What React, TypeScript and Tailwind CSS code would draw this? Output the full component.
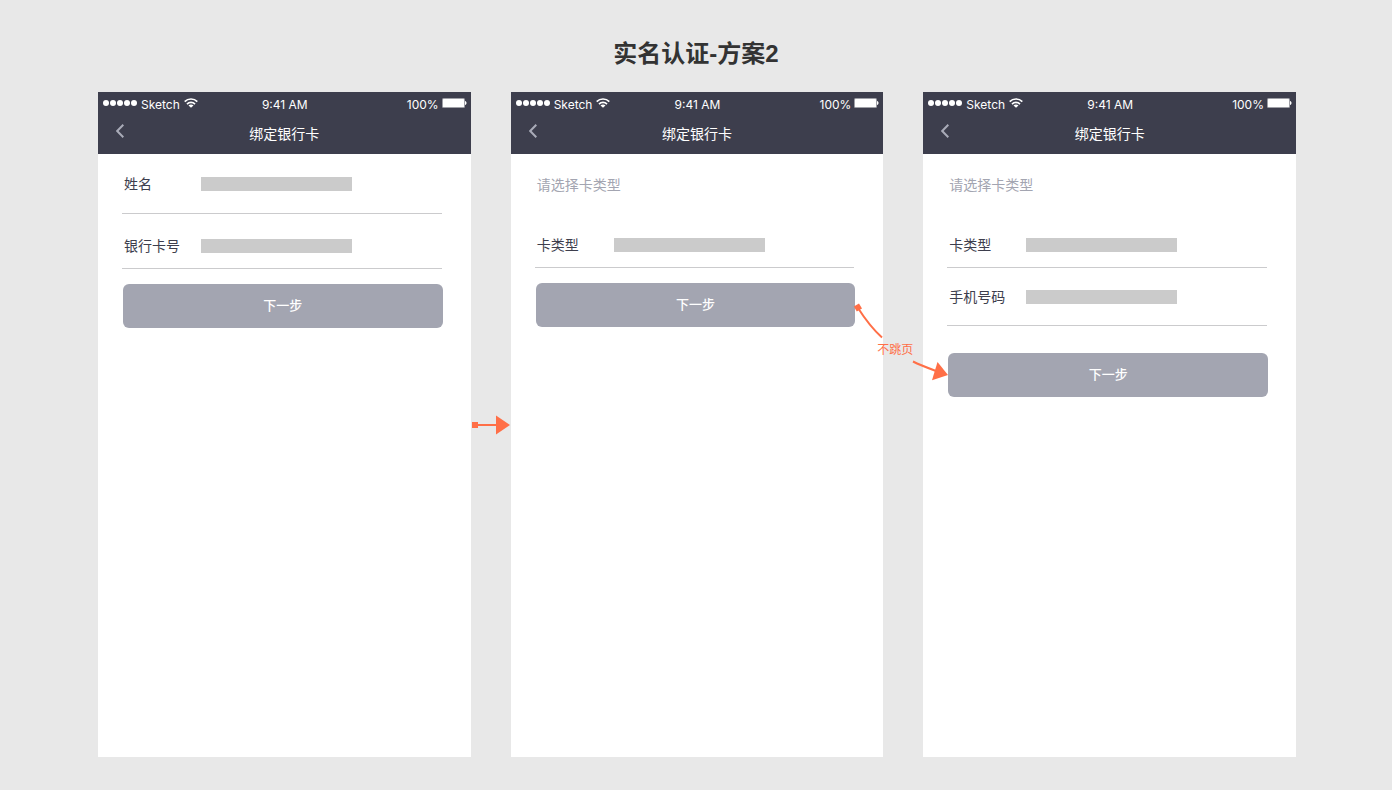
import type { ReactNode } from "react";

type FieldProps = {
  id: string;
  label: string;
  className: string;
};

const StatusBar = () => (
  <div className="grid grid-cols-3 items-center h-[26px] pl-[5px] pr-1 font-['Inter','Liberation_Sans',sans-serif] text-xs leading-6">
    <div className="flex items-center gap-1">
      <svg width="34" height="6" viewBox="0 0 34 6" fill="currentColor" className="-mt-1">
        <circle cx="3" cy="3" r="3" />
        <circle cx="10" cy="3" r="3" />
        <circle cx="17" cy="3" r="3" />
        <circle cx="24" cy="3" r="3" />
        <circle cx="31" cy="3" r="3" />
      </svg>
      <span>Sketch</span>
      <svg
        width="14"
        height="10"
        viewBox="0 0 14 10"
        fill="none"
        stroke="currentColor"
        strokeWidth="1.7"
        className="-mt-1"
      >
        <path d="M0.7 3.7C4.2 0.1 9.8 0.1 13.3 3.7" />
        <path d="M3 6.1C5.2 3.9 8.8 3.9 11 6.1" />
        <path d="M7 9.8L4.5 7.4C5.9 6.2 8.1 6.2 9.5 7.4Z" fill="currentColor" stroke="none" />
      </svg>
    </div>
    <span className="text-center">9:41 AM</span>
    <div className="flex items-center justify-end gap-[3px]">
      <span>100%</span>
      <svg width="25" height="10" viewBox="0 0 25 10" className="-mt-1">
        <rect x="0" y="0" width="23" height="10" rx="1.5" fill="#9e9fa6" />
        <rect x="1" y="1" width="21" height="8" rx="0.5" fill="#fff" />
        <path d="M23 3C25 3.5 25 6.5 23 7Z" fill="#fff" />
      </svg>
    </div>
  </div>
);

const Field = ({ id, label, className }: FieldProps) => (
  <div className={`flex pl-0.5 mr-px border-b border-[#cbcbcd] ${className}`}>
    <label htmlFor={id} className="w-[77px] shrink-0 text-sm leading-[14px] text-[#3d3e4d]">
      {label}
    </label>
    <input id={id} type="text" className="w-[151px] h-[14px] min-w-0 bg-[#cbcbcb] outline-none" />
  </div>
);

const Hint = ({ children }: { children: ReactNode }) => (
  <p className="h-[60px] pl-0.5 text-sm leading-[62px] text-[#a3a5b1]">{children}</p>
);

const NextButton = ({ className }: { className: string }) => (
  <button
    type="submit"
    className={`ml-px h-11 rounded-md bg-[#a3a5b1] text-[13px] font-medium text-white ${className}`}
  >
    下一步
  </button>
);

const Phone = ({ children, connector }: { children: ReactNode; connector?: ReactNode }) => (
  <section className="relative min-h-[665px] bg-white">
    <header className="h-[62px] bg-[#3d3e4d] text-white">
      <StatusBar />
      <div className="grid grid-cols-[48px_1fr_48px] items-center h-8">
        <button type="button" aria-label="返回" className="pl-[18px] pb-1.5">
          <svg
            width="8"
            height="14"
            viewBox="0 0 8 14"
            fill="none"
            stroke="#a9abb8"
            strokeWidth="2"
          >
            <path d="M7.3 0.8L1.2 7L7.3 13.2" />
          </svg>
        </button>
        <h2 className="text-center text-sm leading-5">绑定银行卡</h2>
      </div>
    </header>
    <form className="flex flex-col pl-6 pr-7" onSubmit={(e) => e.preventDefault()}>
      {children}
    </form>
    {connector}
  </section>
);

const StraightArrow = () => (
  <svg
    width="40"
    height="20"
    viewBox="0 0 40 20"
    fill="#ff6f47"
    className="absolute left-full top-[323px]"
  >
    <rect x="1" y="7" width="6" height="6" />
    <rect x="7" y="9" width="18" height="2" />
    <path d="M25 0.5L39 10L25 19.5Z" />
  </svg>
);

// runs from the button of the previous phone to the button of this one
const CurvedArrow = () => (
  <div className="absolute z-10 -left-[70px] top-[208px] w-24 h-[84px] text-[#ff6f47]">
    <svg width="96" height="84" viewBox="0 0 96 84" fill="none" stroke="currentColor">
      <path d="M5 8C12 19 19 28.5 29 37.5" strokeWidth="2" />
      <path d="M60 61.5C67 65 75 68 83 71" strokeWidth="2" />
      <path d="M6 3.4L9 8.6L3.8 11.6L0.8 6.4Z" fill="currentColor" stroke="none" />
      <path d="M84.5 62L95 75L79 80.3Z" fill="currentColor" stroke="none" />
    </svg>
    <span className="absolute left-6 top-10 text-xs leading-5 whitespace-nowrap">不跳页</span>
  </div>
);

const App = () => {
  return (
    <main className="min-h-screen bg-[#e8e8e8] pt-9 pb-8 font-['Liberation_Sans','Noto_Sans_CJK_SC',sans-serif]">
      <h1 className="text-center text-2xl leading-9 font-bold text-[#333]">实名认证-方案2</h1>
      <div className="grid grid-cols-3 gap-10 mt-5 pl-[98px] pr-24">
        <Phone connector={<StraightArrow />}>
          <Field id="name" label="姓名" className="pt-[23px] pb-[22px]" />
          <Field id="card-number" label="银行卡号" className="pt-[25px] pb-[15px]" />
          <NextButton className="mt-[15px]" />
        </Phone>

        <Phone>
          <Hint>请选择卡类型</Hint>
          <Field id="card-type" label="卡类型" className="pt-6 pb-[15px]" />
          <NextButton className="mt-[15px]" />
        </Phone>

        <Phone connector={<CurvedArrow />}>
          <Hint>请选择卡类型</Hint>
          <Field id="card-type-phone" label="卡类型" className="pt-6 pb-[15px]" />
          <Field id="phone" label="手机号码" className="pt-[22px] pb-[21px]" />
          <NextButton className="mt-[27px]" />
        </Phone>
      </div>
    </main>
  );
};

export default App;
